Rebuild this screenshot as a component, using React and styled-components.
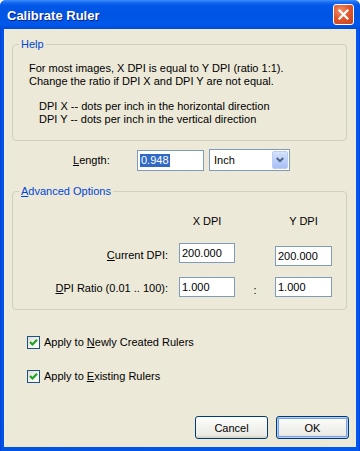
import React from 'react'
import styled, { createGlobalStyle } from 'styled-components'

const GlobalStyle = createGlobalStyle`
  body {
    margin: 0;
    background: #fff;
    font-family: "Liberation Sans", Arial, sans-serif;
  }
`

function CloseIcon() {
  return (
    <svg width="11" height="11" viewBox="0 0 11 11">
      <path d="M1.5 1.5 L9.5 9.5 M9.5 1.5 L1.5 9.5" stroke="#fff" strokeWidth="2.2" strokeLinecap="square" />
    </svg>
  )
}

function Chevron() {
  return (
    <svg width="8" height="6" viewBox="0 0 8 6">
      <polyline points="0.8,1 4,4.2 7.2,1" fill="none" stroke="#4d6185" strokeWidth="2" />
    </svg>
  )
}

function Check() {
  return (
    <svg width="9" height="9" viewBox="0 0 9 9">
      <path d="M1 4 L3.5 6.5 L8 1.8" fill="none" stroke="#21a121" strokeWidth="2.2" />
    </svg>
  )
}

function CheckRow({ label, top }) {
  return (
    <CheckLine $top={top}>
      <CheckBox><Check /></CheckBox>
      <span>{label}</span>
    </CheckLine>
  )
}

export default function App() {
  return (
    <>
      <GlobalStyle />
      <Window>
        <TitleBar>
          <Title>Calibrate Ruler</Title>
          <CloseButton><CloseIcon /></CloseButton>
        </TitleBar>
        <Client>
          <GroupBox $top={15}>
            <Legend>Help</Legend>
            <HelpBody>
              <Line>For most images, X DPI is equal to Y DPI (ratio 1:1).</Line>
              <Line>Change the ratio if DPI X and DPI Y are not equal.</Line>
              <Line $indent $gap>DPI X -- dots per inch in the horizontal direction</Line>
              <Line $indent>DPI Y -- dots per inch in the vertical direction</Line>
            </HelpBody>
          </GroupBox>

          <LengthRow>
            <LengthLabel><u>L</u>ength:</LengthLabel>
            <TextBox $w={67} $h={21}><Selected>0.948</Selected></TextBox>
            <Combo>
              <span>Inch</span>
              <DropButton><Chevron /></DropButton>
            </Combo>
          </LengthRow>

          <GroupBox $top={20}>
            <Legend><u>A</u>dvanced Options</Legend>
            <AdvBody>
              <DpiRow>
                <span />
                <Header>X DPI</Header>
                <span />
                <Header>Y DPI</Header>
              </DpiRow>
              <DpiRow $top={15} $h={23}>
                <RowLabel $top={6}><u>C</u>urrent DPI:</RowLabel>
                <TextBox $w={56} $h={20}>200.000</TextBox>
                <span />
                <TextBox $w={57} $h={20} $shift={3}>200.000</TextBox>
              </DpiRow>
              <DpiRow $top={11} $h={20}>
                <RowLabel $top={5}><u>D</u>PI Ratio (0.01 .. 100):</RowLabel>
                <TextBox $w={56} $h={20}>1.000</TextBox>
                <Colon>:</Colon>
                <TextBox $w={57} $h={20}>1.000</TextBox>
              </DpiRow>
            </AdvBody>
          </GroupBox>

          <CheckRow top={26} label={<>Apply to <u>N</u>ewly Created Rulers</>} />
          <CheckRow top={21} label={<>Apply to <u>E</u>xisting Rulers</>} />

          <ButtonBar>
            <Button>Cancel</Button>
            <Button $default>OK</Button>
          </ButtonBar>
        </Client>
      </Window>
    </>
  )
}

const Window = styled.div`
  width: 360px;
  height: 451px;
  display: flex;
  flex-direction: column;
  background: linear-gradient(90deg, #0831d9 0, #0054e3 1px, #0058ee calc(100% - 1px), #0831d9 100%);
  border-radius: 6px 6px 0 0;
  overflow: hidden;
  font-size: 11px;
  color: #000;
`

const TitleBar = styled.div`
  height: 29px;
  flex-shrink: 0;
  display: flex;
  align-items: center;
  padding: 0 6px 0 7px;
  background: linear-gradient(180deg, #3d8ff9 0%, #1a6cf0 8%, #0058e8 18%, #0054e3 50%, #0058ea 85%, #0049d6 100%);
`

const Title = styled.div`
  font-weight: bold;
  font-size: 13px;
  color: #fff;
  text-shadow: 1px 1px 0 #0a1e8a;
  padding-top: 1px;
`

const CloseButton = styled.div`
  margin-left: auto;
  width: 19px;
  height: 19px;
  border: 1px solid #fff;
  border-radius: 3px;
  display: flex;
  align-items: center;
  justify-content: center;
  background: radial-gradient(circle at 35% 30%, #f0906c 0%, #e1582f 45%, #c7401a 100%);
`

const Client = styled.div`
  flex: 1;
  margin: 0 4px 4px;
  background: #ece9d8;
  display: flex;
  flex-direction: column;
`

const GroupBox = styled.div`
  position: relative;
  margin: ${p => p.$top}px 9px 0 8px;
  border: 1px solid #d0d0bf;
  border-radius: 4px;
`

const Legend = styled.span`
  position: absolute;
  top: -7px;
  left: 6px;
  padding: 0 2px;
  line-height: 13px;
  background: #ece9d8;
  color: #0046d5;
`

const HelpBody = styled.div`
  padding: 17px 0 14px 16px;
`

const Line = styled.p`
  margin: ${p => (p.$gap ? '12px' : '0')} 0 0;
  padding-left: ${p => (p.$indent ? '10px' : '0')};
  line-height: 13px;
`

const LengthRow = styled.div`
  display: flex;
  align-items: center;
  margin-top: 8px;
  padding-left: 69px;
`

const LengthLabel = styled.span`
  width: 64px;
  line-height: 13px;
`

const TextBox = styled.div`
  box-sizing: border-box;
  width: ${p => p.$w}px;
  height: ${p => p.$h}px;
  margin-top: ${p => p.$shift || 0}px;
  border: 1px solid #7f9db9;
  background: #fff;
  padding: 0 2px;
  display: flex;
  align-items: center;
  line-height: 13px;
`

const Selected = styled.span`
  background: #316ac5;
  color: #fff;
  padding: 0 1px;
`

const Combo = styled.div`
  box-sizing: border-box;
  width: 81px;
  height: 22px;
  margin-left: 5px;
  border: 1px solid #7f9db9;
  background: #fff;
  display: flex;
  align-items: center;
  justify-content: space-between;
  padding: 1px 1px 1px 4px;
`

const DropButton = styled.div`
  box-sizing: border-box;
  width: 16px;
  height: 18px;
  border: 1px solid #bccdf5;
  border-radius: 2px;
  background: linear-gradient(180deg, #d6e2fd 0%, #bcd0fa 50%, #a7bff5 100%);
  display: flex;
  align-items: center;
  justify-content: center;
`

const AdvBody = styled.div`
  padding: 23px 0 12px;
`

const DpiRow = styled.div`
  display: grid;
  grid-template-columns: 166px 56px 40px 57px;
  margin-top: ${p => p.$top || 0}px;
  height: ${p => (p.$h ? `${p.$h}px` : 'auto')};
  align-items: start;
`

const Header = styled.span`
  text-align: center;
  line-height: 13px;
`

const RowLabel = styled.span`
  text-align: right;
  padding-right: 11px;
  margin-top: ${p => p.$top}px;
  line-height: 13px;
`

const Colon = styled.span`
  text-align: center;
  align-self: end;
  line-height: 13px;
`

const CheckLine = styled.label`
  display: flex;
  align-items: center;
  margin-top: ${p => p.$top}px;
  padding-left: 23px;
  line-height: 13px;
`

const CheckBox = styled.span`
  box-sizing: border-box;
  width: 13px;
  height: 13px;
  margin-right: 4px;
  border: 1px solid #1c5180;
  background: linear-gradient(135deg, #dcdcd7 0%, #f5f5f2 60%, #fff 100%);
  display: flex;
  align-items: center;
  justify-content: center;
`

const ButtonBar = styled.div`
  margin-top: auto;
  display: flex;
  justify-content: flex-end;
  gap: 8px;
  padding: 0 7px 8px 0;
`

const Button = styled.div`
  box-sizing: border-box;
  width: 73px;
  height: 23px;
  border: 1px solid #003c74;
  border-radius: 3px;
  background: linear-gradient(180deg, #fff 0%, #f4f4f0 40%, #ecebe6 85%, #d6d0c5 100%);
  display: flex;
  align-items: center;
  justify-content: center;
  box-shadow: ${p => (p.$default ? 'inset 0 0 0 1px #b3cef7, inset 0 0 0 2px #7aa0e8' : 'none')};
`
